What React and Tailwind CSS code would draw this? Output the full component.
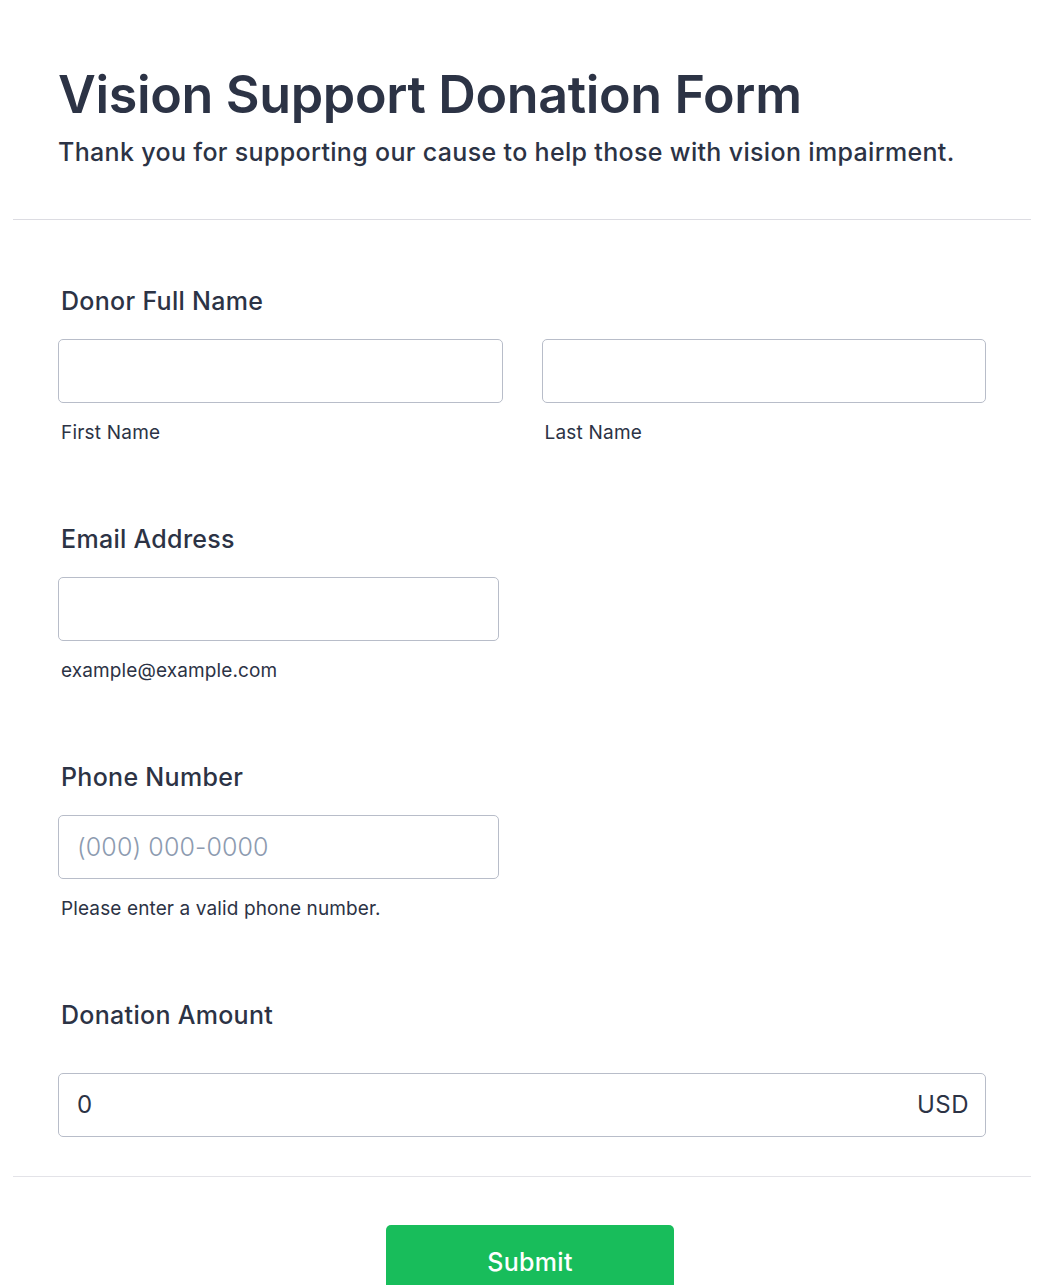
import { useState } from "react";

const font = { fontFamily: "Inter, 'Noto Sans', sans-serif" };

const Field = ({ label, children, hint, gap = "mb-[22px]" }) => (
    <div className="flex flex-col">
        <label className={`text-[25px] leading-[32px] font-medium tracking-[0.3px] text-[#2c3345] pl-[3px] ${gap}`}>{label}</label>
        {children}
        {hint && (
            <div className="mt-[18px] text-[19px] leading-[24px] tracking-[0.12px] text-[#2c3345] pl-[3px]">{hint}</div>
        )}
    </div>
);

const inputClass = "h-[64px] w-full rounded-[5px] border border-[#b8bdc9] bg-white px-[18px] text-[25px] tracking-[0.1px] text-[#2c3345] placeholder:text-[#8d9bb0] placeholder:font-light outline-none";

const App = () => {
    const [amount, setAmount] = useState("0");

    return (
        <div className="min-h-[1285px] bg-white px-[13px]" style={font}>
            <div className="pl-[45px] pt-[64px] pb-[51px] text-[#2c3345]">
                <h1 className="text-[52px] leading-[62px] font-semibold tracking-[-0.35px]">Vision Support Donation Form</h1>
                <p className="mt-[10px] text-[25px] leading-[32px] font-medium tracking-[0.33px]">Thank you for supporting our cause to help those with vision impairment.</p>
            </div>
            <div className="h-px bg-[#dcdce2]" />

            <div className="flex flex-col gap-[78px] pl-[45px] pr-[45px] pt-[65px]">
                <Field label="Donor Full Name">
                    <div className="grid grid-cols-2 gap-[39px]">
                        <div className="flex flex-col">
                            <input className={inputClass} />
                            <span className="mt-[18px] text-[19px] leading-[24px] tracking-[0.2px] text-[#2c3345] pl-[3px]">First Name</span>
                        </div>
                        <div className="flex flex-col">
                            <input className={inputClass} />
                            <span className="mt-[18px] text-[19px] leading-[24px] tracking-[0.2px] text-[#2c3345] pl-[3px]">Last Name</span>
                        </div>
                    </div>
                </Field>

                <Field label="Email Address" hint="example@example.com">
                    <div className="w-[441px]">
                        <input className={inputClass} />
                    </div>
                </Field>

                <Field label="Phone Number" hint="Please enter a valid phone number.">
                    <div className="w-[441px]">
                        <input className={inputClass} placeholder="(000) 000-0000" />
                    </div>
                </Field>

                <Field label="Donation Amount" gap="mb-[42px]">
                    <div className="flex h-[64px] items-center rounded-[5px] border border-[#b8bdc9] bg-white pl-[18px] pr-[16px]">
                        <input
                            className="flex-1 text-[24px] text-[#2c3345] outline-none"
                            value={amount}
                            onChange={e => setAmount(e.target.value)}
                        />
                        <span className="text-[24px] tracking-[0.5px] text-[#2c3345]">USD</span>
                    </div>
                </Field>
            </div>

            <div className="mt-[39px] h-px bg-[#e3e3e8]" />
            <div className="flex justify-center pt-[48px]">
                <button className="ml-[16px] h-[78px] w-[288px] rounded-[5px] bg-[#18bd5b] text-[25px] font-medium tracking-[0.3px] text-white pb-[2px]">
                    Submit
                </button>
            </div>
        </div>
    );
};

export default App;
